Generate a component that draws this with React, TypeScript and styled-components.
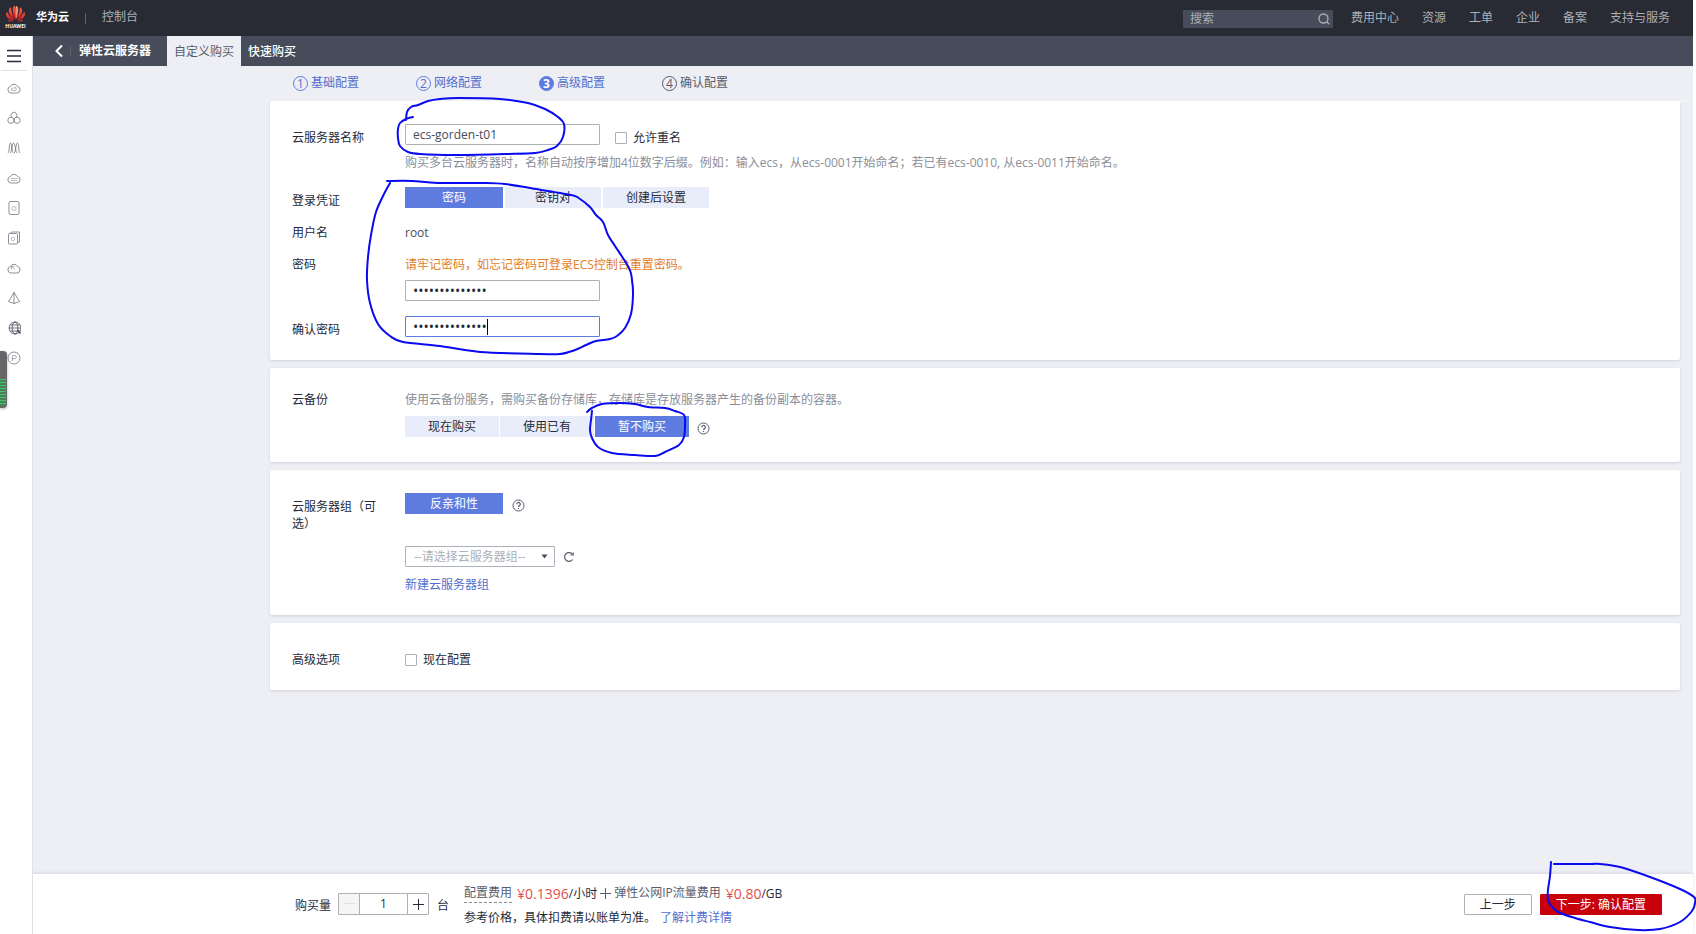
import React from 'react';
import styled, { createGlobalStyle, css } from 'styled-components';

const fontStack = `"Open Sans", "Noto Sans CJK SC", sans-serif`;

const color = {
  ink: '#252b3a',
  sub: '#464c59',
  muted: '#8a8e99',
  border: '#adb0b8',
  blue: '#5e7ce0',
  link: '#526ecc',
  pale: '#e9edfa',
  page: '#eeeff5',
  red: '#c7000b',
  price: '#de504e',
};

const GlobalStyle = createGlobalStyle`
  *, *::before, *::after { box-sizing: border-box; }
  body { margin: 0; background: #fff; overflow: hidden auto; }
  button, input, select { font: inherit; color: inherit; margin: 0; padding: 0; border-radius: 0; }
  a { text-decoration: none; color: inherit; }
`;

const Page = styled.div`
  position: relative;
  display: flex;
  flex-direction: column;
  min-height: 100vh;
  padding-right: 3px;
  font: 12px/18px ${fontStack};
  color: ${color.ink};
`;

/* ---------- top bar ---------- */

const TopBar = styled.header`
  display: flex;
  align-items: center;
  height: 36px;
  padding-left: 5px;
  background: #282b33;
  color: #adb0b8;
  overflow: hidden;
  white-space: nowrap;
`;

const Brand = styled.a`
  display: flex;
  align-items: center;
  gap: 10px;
  padding-bottom: 2px;
  color: #fff;
  font-size: 11px;
  font-weight: 700;
`;

const BarDivider = styled.span<{ $space: number }>`
  width: 1px;
  height: 11px;
  margin: 0 ${(p) => p.$space}px;
  background: #5d616b;
`;

const ConsoleLink = styled.a`
  padding-bottom: 2px;
`;

const SearchBox = styled.label`
  display: flex;
  align-items: center;
  width: 150px;
  height: 18px;
  margin: 2px 0 0 auto;
  padding: 0 3px 0 7px;
  border-radius: 1px;
  background: ${color.sub};
  svg { flex: none; }
`;

const SearchInput = styled.input`
  flex: 1;
  min-width: 0;
  height: 18px;
  border: 0;
  outline: 0;
  background: transparent;
  &::placeholder { color: #adb0b8; opacity: 1; }
`;

const TopNav = styled.nav`
  display: flex;
  flex: none;
  gap: 23px;
  width: 360px;
  padding-left: 18px;
  overflow: hidden;
`;

/* ---------- side bar ---------- */

const Body = styled.div`
  display: flex;
  flex: 1;
`;

const SideBar = styled.nav`
  position: relative;
  display: flex;
  flex: none;
  flex-direction: column;
  align-items: center;
  width: 33px;
  padding: 5px 4px 0 0;
  border-right: 1px solid #dfe1e6;
  background: #fff;
`;

const SideButton = styled.button<{ $menu?: boolean }>`
  display: flex;
  align-items: center;
  justify-content: center;
  width: 26px;
  height: 30px;
  border: 0;
  background: transparent;
  color: #70757f;
  ${(p) =>
    p.$menu &&
    css`
      border-bottom: 1px solid #dfe1e6;
      margin-bottom: 2px;
      color: ${color.ink};
    `}
`;

const Meter = styled.div`
  position: absolute;
  top: 315px;
  left: 0;
  display: flex;
  align-items: flex-end;
  width: 7px;
  height: 57px;
  padding-bottom: 2px;
  border-radius: 0 4px 4px 0;
  background: #666;
  box-shadow: 0 1px 3px rgba(0, 0, 0, 0.3);
`;

const MeterFill = styled.div`
  width: 6px;
  height: 27px;
  background: repeating-linear-gradient(#3fc768 0 1px, #4b7f59 1px 3px);
`;

/* ---------- main column ---------- */

const Main = styled.main`
  display: flex;
  flex: 1;
  flex-direction: column;
  min-width: 0;
  background: ${color.page};
`;

const SubBar = styled.div`
  display: flex;
  align-items: center;
  height: 30px;
  padding-left: 20px;
  background: ${color.sub};
  color: #fff;
`;

const BackButton = styled.button`
  display: flex;
  width: 13px;
  border: 0;
  background: transparent;
  color: #fff;
`;

const ServiceTitle = styled.strong`
  padding: 0 16px 0 4px;
  line-height: 32px;
`;

const Tab = styled.a<{ $active?: boolean }>`
  height: 30px;
  padding: 0 7px;
  line-height: 32px;
  ${(p) =>
    p.$active
      ? css`
          background: ${color.page};
          color: #575d6c;
        `
      : css`
          font-weight: 500;
        `}
`;

const Steps = styled.ol`
  display: flex;
  align-items: center;
  height: 34px;
  margin: 0;
  padding: 0 0 0 260px;
  list-style: none;
`;

type StepState = 'done' | 'active' | 'todo';

const Step = styled.li<{ $state: StepState }>`
  display: flex;
  align-items: center;
  gap: 3px;
  width: 123px;
  color: ${(p) => (p.$state === 'todo' ? '#575d6c' : color.link)};
`;

const StepNumber = styled.span<{ $state: StepState }>`
  display: flex;
  align-items: center;
  justify-content: center;
  width: 15px;
  height: 15px;
  border: 1px solid ${(p) => (p.$state === 'todo' ? '#575d6c' : color.blue)};
  border-radius: 50%;
  line-height: 13px;
  ${(p) =>
    p.$state === 'active' &&
    css`
      background: ${color.blue};
      color: #fff;
      font-weight: 700;
    `}
`;

const Content = styled.div`
  display: flex;
  flex-direction: column;
  gap: 8px;
  margin: 0 5px 0 230px;
  padding: 0 8px 24px 7px;
  border-top: 1px solid #f5f6fa;
`;

const Card = styled.section<{ $top?: number; $bottom: number }>`
  display: flex;
  flex-direction: column;
  gap: 15px;
  padding: ${(p) => p.$top ?? 23}px 22px ${(p) => p.$bottom}px;
  border-radius: 2px;
  background: #fff;
  box-shadow: 0 1px 3px rgba(37, 43, 58, 0.14);
`;

const Row = styled.div`
  display: grid;
  grid-template-columns: 88px 1fr;
  column-gap: 25px;
  align-items: start;
`;

const Label = styled.label<{ $boxed?: boolean }>`
  line-height: 17px;
  padding-top: ${(p) => (p.$boxed ? 5 : 0)}px;
`;

const Line = styled.div<{ $top?: number; $gap?: number }>`
  display: flex;
  align-items: center;
  gap: ${(p) => p.$gap ?? 8}px;
  margin-top: ${(p) => p.$top ?? 0}px;
`;

const Text = styled.p<{ $tone?: string; $top?: number }>`
  margin: ${(p) => p.$top ?? 0}px 0 0;
  color: ${(p) => p.$tone ?? 'inherit'};
`;

const Value = styled.span`
  line-height: 17px;
  color: ${color.sub};
`;

const Warning = styled.p`
  margin: 0;
  line-height: 17px;
  color: #e37d29;
`;

const TextInput = styled.input<{ $focused?: boolean }>`
  display: block;
  width: 195px;
  height: 21px;
  padding: 0 7px;
  border: 1px solid ${(p) => (p.$focused ? color.blue : color.border)};
  border-radius: 1px;
  outline: 0;
  background: #fff;
  color: #464c59;
  &[type='password'] {
    font-size: 14px;
    color: ${color.ink};
    caret-color: transparent;
  }
`;

const CaretField = styled.div<{ $top?: number }>`
  position: relative;
  width: 195px;
  margin-top: ${(p) => p.$top ?? 0}px;
`;

const Caret = styled.span`
  position: absolute;
  top: 3px;
  left: 82px;
  width: 1px;
  height: 16px;
  background: #000;
`;

const CheckLabel = styled.label<{ $top?: number }>`
  display: flex;
  align-items: center;
  gap: 6px;
  margin-top: ${(p) => p.$top ?? 0}px;
`;

const CheckBox = styled.input`
  appearance: none;
  width: 12px;
  height: 12px;
  border: 1px solid ${color.border};
  border-radius: 1px;
  background: #fff;
`;

const NameLine = styled.div`
  display: flex;
  gap: 15px;
  height: 21px;
`;

const Segments = styled.div<{ $gap?: number }>`
  display: flex;
  gap: ${(p) => p.$gap ?? 1}px;
`;

const Segment = styled.button<{ $on?: boolean; $pad: number }>`
  height: 21px;
  padding: 0 ${(p) => p.$pad}px;
  border: 0;
  background: ${(p) => (p.$on ? color.blue : color.pale)};
  color: ${(p) => (p.$on ? '#fff' : color.ink)};
  line-height: 21px;
`;

const IconButton = styled.button`
  display: flex;
  border: 0;
  background: transparent;
  color: #575d6c;
`;

const HelpButton = styled(IconButton)`
  padding-top: 3px;
`;

const SelectWrap = styled.div`
  position: relative;
  width: 150px;
  svg { position: absolute; top: 8px; right: 7px; pointer-events: none; }
`;

const Select = styled.select`
  display: block;
  appearance: none;
  width: 100%;
  height: 21px;
  padding: 0 20px 0 8px;
  border: 1px solid ${color.border};
  border-radius: 1px;
  background: #fff;
  color: #adb0b8;
`;

const Link = styled.a<{ $top?: number; $left?: number }>`
  display: inline-block;
  margin: ${(p) => p.$top ?? 0}px 0 0 ${(p) => p.$left ?? 0}px;
  color: ${color.link};
`;

/* ---------- footer ---------- */

const Footer = styled.footer`
  display: flex;
  align-items: center;
  height: 60px;
  margin-top: auto;
  padding: 0 31px 0 262px;
  background: #fff;
  box-shadow: 0 -1px 3px rgba(37, 43, 58, 0.12);
  white-space: nowrap;
`;

const Caption = styled.label`
  padding-top: 4px;
`;

const Stepper = styled.div`
  display: flex;
  height: 22px;
  margin: 0 8px 0 7px;
  border: 1px solid ${color.border};
  border-radius: 1px;
`;

const StepperButton = styled.button`
  display: flex;
  align-items: center;
  justify-content: center;
  width: 20px;
  border: 0;
  background: #fff;
  color: ${color.ink};
  &:disabled { background: #f5f5f6; color: #dfe1e6; }
`;

const StepperInput = styled.input`
  width: 49px;
  border: solid ${color.border};
  border-width: 0 1px;
  outline: 0;
  text-align: center;
`;

const Price = styled.div`
  display: flex;
  flex-direction: column;
  gap: 4px;
  margin-left: 15px;
  padding-top: 3px;
`;

const PriceLine = styled.div`
  display: flex;
  align-items: center;
  height: 20px;
`;

const FeeName = styled.span<{ $dashed?: boolean }>`
  height: 19px;
  color: #575d6c;
  ${(p) => p.$dashed && `border-bottom: 1px dashed ${color.muted};`}
`;

const Amount = styled.span`
  margin-left: 5px;
  font-size: 14px;
  color: ${color.price};
`;

const Plus = styled.span`
  display: flex;
  margin: 0 3px;
  color: #575d6c;
`;

const Actions = styled.div`
  display: flex;
  gap: 8px;
  margin-left: auto;
`;

const ActionButton = styled.button<{ $primary?: boolean }>`
  height: 21px;
  padding: 0 15px;
  border: 1px solid ${(p) => (p.$primary ? color.red : color.border)};
  border-radius: 1px;
  background: ${(p) => (p.$primary ? color.red : '#fff')};
  color: ${(p) => (p.$primary ? '#fff' : color.ink)};
  line-height: 19px;
`;

/* ---------- hand-drawn marks ---------- */

const InkLayer = styled.svg<{ $corner?: boolean }>`
  position: absolute;
  ${(p) => (p.$corner ? 'right: 0; bottom: 0;' : 'left: 0; top: 0;')}
  pointer-events: none;
  fill: none;
  stroke: #0a0af0;
  stroke-width: 2;
  stroke-linecap: round;
  stroke-linejoin: round;
`;

type Point = [number, number];

/* Smooth curve through every point of a stroke. */
function strokePath(points: Point[]): string {
  let d = `M${points[0].join(' ')}`;
  for (let i = 0; i < points.length - 1; i++) {
    const a = points[Math.max(i - 1, 0)];
    const b = points[i];
    const c = points[i + 1];
    const e = points[Math.min(i + 2, points.length - 1)];
    d += ` C${b[0] + (c[0] - a[0]) / 6} ${b[1] + (c[1] - a[1]) / 6} ${c[0] - (e[0] - b[0]) / 6} ${c[1] - (e[1] - b[1]) / 6} ${c[0]} ${c[1]}`;
  }
  return d;
}

const nameMark: Point[] = [
  [406, 120], [407, 112], [411, 107], [418, 105], [428, 101], [440, 99], [458, 98], [500, 99], [528, 103], [545, 109],
  [558, 117], [564, 124], [563, 137], [557, 146], [548, 150], [535, 153], [505, 154], [455, 155], [420, 154],
  [408, 152], [400, 146], [398, 138], [398, 129], [400, 123], [406, 119], [413, 117],
];

const loginMark: Point[] = [
  [387, 181], [412, 181], [438, 183], [486, 183], [505, 184], [530, 188], [571, 195], [580, 199], [590, 207],
  [596, 215], [603, 222], [608, 235], [615, 246], [629, 268], [632, 280], [633, 295], [631, 314], [625, 328],
  [617, 336], [610, 339], [596, 341], [586, 345], [575, 350], [560, 354], [540, 354], [480, 352], [440, 346],
  [403, 342], [390, 336], [378, 324], [370, 303], [367, 280], [368, 257], [371, 235], [376, 212], [384, 194],
  [390, 183],
];

const backupMark: Point[] = [
  [587, 412], [592, 408], [602, 404], [620, 403], [635, 404], [648, 407], [665, 408], [675, 411], [684, 415],
  [685, 425], [684, 437], [679, 445], [665, 452], [655, 456], [635, 455], [612, 453], [598, 447], [592, 438],
  [590, 430], [591, 420], [592, 411],
];

const nextMark: Point[] = [
  [21, 8], [20, 22], [18, 36], [18, 46], [23, 54], [30, 59], [45, 64], [60, 68], [80, 73], [108, 76], [130, 75],
  [150, 68], [162, 57], [165, 49], [164, 43], [150, 35], [120, 23], [90, 13], [70, 10], [60, 10], [24, 10],
];

/* ---------- icons ---------- */

const cloud = 'M4 12a3.300 3.300 0 0 1-.6-6.500 4 4 0 0 1 7.200 0 3.300 3.300 0 0 1-.6 6.500z';

const sideIcons: { name: string; art: React.ReactNode }[] = [
  { name: '弹性云服务器', art: <><path d={cloud} /><path d="M4.500 9.500V7.500l4.500-1v3z" opacity=".6" /></> },
  { name: '裸金属服务器', art: <><path d="M4.800 6.300a3 3 0 1 1 4.400 0" /><circle cx="3.900" cy="9.300" r="3.100" /><circle cx="10.100" cy="9.300" r="3.100" /></> },
  { name: '弹性伸缩', art: <path d="M.8 12c2 0 1-10 2.700-10s1.200 10 3 10M3 12c1.800 0 1.800-10 3.600-10s1.800 10 3.600 10M7 12c1.800 0 1.800-10 3.500-10s.7 10 2.700 10" /> },
  { name: '云容器', art: <><path d={cloud} /><path d="M3.500 7.500h7M3.500 9.500h7" opacity=".6" /></> },
  { name: '云硬盘', art: <><rect x="2" y=".5" width="10" height="13" rx="1.500" /><circle cx="7" cy="7.500" r="2" opacity=".6" /></> },
  { name: '云硬盘备份', art: <><path d="M3 2.500 4.500 1h8v10H11" /><rect x="1.500" y="2.500" width="9" height="10.500" rx="1" /><circle cx="6" cy="8" r="1.700" opacity=".6" /></> },
  { name: '对象存储', art: <><path d={cloud} /><path d="M4.500 8.500v-3h3M4.500 5.500l3.500 3" opacity=".7" /></> },
  { name: '虚拟私有云', art: <path d="M7 1.500 1.500 10.500 7 12.500l5.500-2zM7 1v11.500" /> },
  { name: '弹性公网IP', art: <g stroke="#464c59"><circle cx="8" cy="7" r="6" /><ellipse cx="8" cy="7" rx="2.800" ry="6" /><path d="M2 7h12M3 4h10M3 10h10" /><path d="m10.500 9 3 3.500" strokeWidth="1.600" /></g> },
  { name: '费用', art: <><circle cx="7" cy="7" r="6" /><path d="M5.500 10V4.500h2.300a1.600 1.600 0 0 1 0 3.200H4.500" opacity=".7" /></> },
];

const HelpIcon = () => (
  <svg width="13" height="13" viewBox="0 0 13 13" fill="none" stroke="currentColor">
    <circle cx="6.500" cy="6.500" r="5.500" />
    <path d="M4.700 5.300a1.800 1.800 0 1 1 2.600 1.600c-.6.3-.8.500-.8 1.100M6.500 8.900v1.100" strokeWidth="1.200" />
  </svg>
);

const Petals = () => (
  <svg width="21" height="24" viewBox="0 0 21 24">
    <defs>
      <linearGradient id="petal" x1="0" y1="0" x2="0" y2="1">
        <stop offset="0" stopColor="#f2604a" />
        <stop offset="1" stopColor="#d5141b" />
      </linearGradient>
    </defs>
    <g fill="url(#petal)">
      <path d="M10.200 14.500C8.500 11 7.200 6 8 2.500 8.300 1.300 9.200.7 10 1c.8 2.500.7 9 .2 13.500z" />
      <path d="M10.800 14.500C12.500 11 13.800 6 13 2.500 12.700 1.300 11.800.7 11 1c-.8 2.500-.7 9-.2 13.500z" fill="#f08b70" />
      <path d="M9.500 14.700C6.500 13 3.500 9 3.800 5.500 3.900 4 5 2.800 6 2.600c.5 4 1.700 8.500 3.500 12.100z" />
      <path d="M11.500 14.700C14.500 13 17.500 9 17.200 5.500 17.100 4 16 2.800 15 2.600c-.5 4-1.700 8.500-3.500 12.100z" />
      <path d="M9 15.300C5.500 15.300 1.500 13.200 1.100 9.800 1 8.500 1.300 7.600 1.900 7c1.700 3.200 4.300 6.200 7.100 8.300z" />
      <path d="M12 15.300c3.500 0 7.500-2.100 7.900-5.500.1-1.300-.2-2.200-.8-2.800-1.700 3.200-4.300 6.200-7.100 8.300z" />
      <path d="M8.800 16c-2 .9-5 1-6.200-1.200 1.900.6 4.100 1 6.200 1.200z" />
      <path d="M12.200 16c2 .9 5 1 6.200-1.200-1.900.6-4.100 1-6.200 1.200z" />
    </g>
    <text x="10.500" y="22.500" fill="#fff" fontSize="5" fontWeight="700" textAnchor="middle">HUAWEI</text>
  </svg>
);

const steps: { title: string; state: StepState }[] = [
  { title: '基础配置', state: 'done' },
  { title: '网络配置', state: 'done' },
  { title: '高级配置', state: 'active' },
  { title: '确认配置', state: 'todo' },
];

const topLinks = ['费用中心', '资源', '工单', '企业', '备案', '支持与服务', '中'];

export default function App() {
  return (
    <Page>
      <GlobalStyle />
      <TopBar>
        <Brand href="#"><Petals />华为云</Brand>
        <BarDivider $space={16} />
        <ConsoleLink href="#">控制台</ConsoleLink>
        <SearchBox>
          <SearchInput type="text" placeholder="搜索" aria-label="搜索" />
          <svg width="12" height="12" viewBox="0 0 12 12" fill="none" stroke="currentColor" strokeWidth="1.300">
            <circle cx="5.500" cy="5.500" r="4.500" /><path d="m8.700 8.700 2.500 2.500" />
          </svg>
        </SearchBox>
        <TopNav>
          {topLinks.map((t) => <a key={t} href="#">{t}</a>)}
        </TopNav>
      </TopBar>

      <Body>
        <SideBar>
          <SideButton $menu aria-label="菜单">
            <svg width="14" height="14" viewBox="0 0 14 14" stroke="currentColor" strokeWidth="1.500"><path d="M0 1.500h14M0 7h14M0 12.500h14" /></svg>
          </SideButton>
          {sideIcons.map((i) => (
            <SideButton key={i.name} aria-label={i.name}>
              <svg width="14" height="14" viewBox="0 0 14 14" fill="none" stroke="currentColor" strokeWidth=".8">{i.art}</svg>
            </SideButton>
          ))}
          <Meter><MeterFill /></Meter>
        </SideBar>

        <Main>
          <SubBar>
            <BackButton aria-label="返回">
              <svg width="13" height="14" viewBox="0 0 13 14" fill="none" stroke="currentColor" strokeWidth="2"><path d="M9 1.500 3.500 7 9 12.500" /></svg>
            </BackButton>
            <BarDivider $space={4} />
            <ServiceTitle>弹性云服务器</ServiceTitle>
            <Tab href="#" $active>自定义购买</Tab>
            <Tab href="#">快速购买</Tab>
          </SubBar>

          <Steps>
            {steps.map((s, i) => (
              <Step key={s.title} $state={s.state}>
                <StepNumber $state={s.state}>{i + 1}</StepNumber>{s.title}
              </Step>
            ))}
          </Steps>

          <Content>
            <Card $bottom={22}>
              <Row>
                <Label $boxed htmlFor="name">云服务器名称</Label>
                <div>
                  <NameLine>
                    <TextInput id="name" type="text" defaultValue="ecs-gorden-t01" />
                    <CheckLabel $top={6}><CheckBox type="checkbox" />允许重名</CheckLabel>
                  </NameLine>
                  <Text $tone={color.muted} $top={9}>
                    购买多台云服务器时，名称自动按序增加4位数字后缀。例如：输入ecs，从ecs-0001开始命名；若已有ecs-0010, 从ecs-0011开始命名。
                  </Text>
                </div>
              </Row>
              <Row>
                <Label as="span" $boxed>登录凭证</Label>
                <Segments $gap={2}>
                  <Segment $on $pad={37}>密码</Segment>
                  <Segment $pad={30}>密钥对</Segment>
                  <Segment $pad={23}>创建后设置</Segment>
                </Segments>
              </Row>
              <Row>
                <Label as="span">用户名</Label>
                <Value>root</Value>
              </Row>
              <Row>
                <Label htmlFor="password">密码</Label>
                <div>
                  <Warning>请牢记密码，如忘记密码可登录ECS控制台重置密码。</Warning>
                  <CaretField $top={7}>
                    <TextInput id="password" type="password" defaultValue="abcdefghijklmn" />
                  </CaretField>
                </div>
              </Row>
              <Row>
                <Label $boxed htmlFor="confirm">确认密码</Label>
                <CaretField>
                  <TextInput id="confirm" type="password" $focused defaultValue="abcdefghijklmn" />
                  <Caret />
                </CaretField>
              </Row>
            </Card>

            <Card $bottom={25}>
              <Row>
                <Label as="span">云备份</Label>
                <div>
                  <Text $tone={color.muted}>使用云备份服务，需购买备份存储库，存储库是存放服务器产生的备份副本的容器。</Text>
                  <Line $top={7}>
                    <Segments>
                      <Segment $pad={23}>现在购买</Segment>
                      <Segment $pad={23}>使用已有</Segment>
                      <Segment $on $pad={23}>暂不购买</Segment>
                    </Segments>
                    <HelpButton aria-label="帮助"><HelpIcon /></HelpButton>
                  </Line>
                </div>
              </Row>
            </Card>

            <Card $bottom={21}>
              <Row>
                <Label $boxed htmlFor="group">云服务器组（可选）</Label>
                <div>
                  <Line $gap={9}>
                    <Segment $on $pad={25}>反亲和性</Segment>
                    <HelpButton aria-label="帮助"><HelpIcon /></HelpButton>
                  </Line>
                  <Line $top={32}>
                    <SelectWrap>
                      <Select id="group"><option>--请选择云服务器组--</option></Select>
                      <svg width="7" height="5" viewBox="0 0 7 5"><path d="M.5.500h6L3.500 4.500z" fill="#464c59" /></svg>
                    </SelectWrap>
                    <IconButton aria-label="刷新">
                      <svg width="12" height="12" viewBox="0 0 12 12" fill="none" stroke="currentColor" strokeWidth="1.200">
                        <path d="M9.600 8.500A4.400 4.400 0 1 1 9.500 3.300" /><path d="M10.200 1.500v2.500H7.500" />
                      </svg>
                    </IconButton>
                  </Line>
                  <Link href="#" $top={9}>新建云服务器组</Link>
                </div>
              </Row>
            </Card>

            <Card $top={28} $bottom={21}>
              <Row>
                <Label as="span">高级选项</Label>
                <CheckLabel><CheckBox type="checkbox" />现在配置</CheckLabel>
              </Row>
            </Card>
          </Content>

          <Footer>
            <Caption htmlFor="count">购买量</Caption>
            <Stepper>
              <StepperButton disabled aria-label="减少">
                <svg width="12" height="12" stroke="currentColor"><path d="M0 5.500h12" /></svg>
              </StepperButton>
              <StepperInput id="count" type="text" defaultValue="1" />
              <StepperButton aria-label="增加">
                <svg width="11" height="11" stroke="currentColor"><path d="M0 5.500h11M5.500 0v11" /></svg>
              </StepperButton>
            </Stepper>
            <Caption as="span">台</Caption>
            <Price>
              <PriceLine>
                <FeeName $dashed>配置费用</FeeName>
                <Amount>¥0.1396</Amount>/小时
                <Plus><svg width="11" height="11" stroke="currentColor"><path d="M0 5.500h11M5.500 0v11" /></svg></Plus>
                <FeeName>弹性公网IP流量费用</FeeName>
                <Amount>¥0.80</Amount>/GB
              </PriceLine>
              <PriceLine>
                参考价格，具体扣费请以账单为准。<Link href="#" $left={4}>了解计费详情</Link>
              </PriceLine>
            </Price>
            <Actions>
              <ActionButton>上一步</ActionButton>
              <ActionButton $primary>下一步: 确认配置</ActionButton>
            </Actions>
          </Footer>
        </Main>
      </Body>

      <InkLayer width="700" height="480">
        <path d={strokePath(nameMark)} />
        <path d={strokePath(loginMark)} />
        <path d={strokePath(backupMark)} />
      </InkLayer>
      <InkLayer $corner width="166" height="80">
        <path d={strokePath(nextMark)} />
      </InkLayer>
    </Page>
  );
}
